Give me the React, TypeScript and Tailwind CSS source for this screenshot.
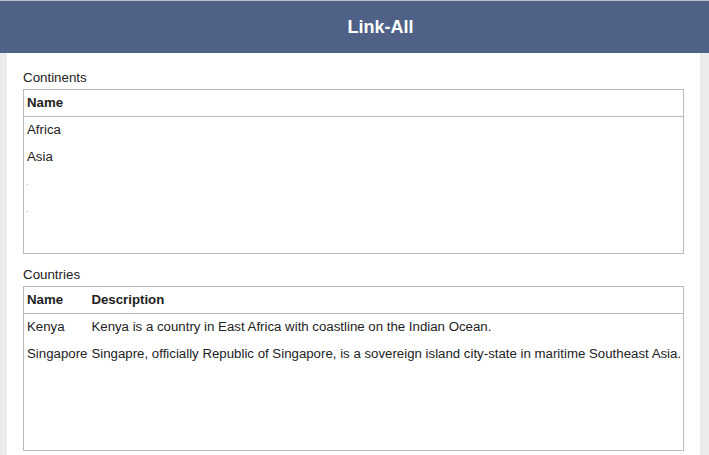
import React from "react";

const font = { fontFamily: '"Liberation Sans", Arial, sans-serif' };

function Section({
  title,
  headers,
  rows,
}: {
  title: string;
  headers: string[];
  rows: (string | null)[][];
}) {
  return (
    <div className="mb-3">
      <div className="text-[13.33px] leading-[17px] text-[#222] mb-[3px]">{title}</div>
      <div className="h-[165px] border border-[#bbbbbb] bg-white overflow-hidden">
        <table className="w-full border-collapse text-[13.25px] text-[#222]">
          <thead>
            <tr className="h-[26px] border-b border-[#bbbbbb]">
              {headers.map((h, i) => (
                <th
                  key={i}
                  className={`text-left font-bold pl-[3px] pr-px whitespace-nowrap ${
                    i === headers.length - 1 ? "w-full" : ""
                  }`}
                >
                  {h}
                </th>
              ))}
            </tr>
          </thead>
          <tbody>
            {rows.map((r, ri) => (
              <tr key={ri} className="h-[27px]">
                {r.map((c, ci) => (
                  <td key={ci} className="pl-[3px] pr-px whitespace-nowrap align-middle">
                    {c === null ? (
                      <span className="inline-block w-px h-px bg-[#d9a676] align-middle" />
                    ) : (
                      c
                    )}
                  </td>
                ))}
              </tr>
            ))}
          </tbody>
        </table>
      </div>
    </div>
  );
}

export default function App() {
  return (
    <div className="h-[455px] overflow-hidden bg-[#ebebeb]" style={font}>
      <header className="h-[53px] border-t border-[#b8bcc6] bg-[#4f6186] flex items-center justify-center pl-[52px]">
        <h1 className="text-white font-bold text-[18px]">Link-All</h1>
      </header>
      <main className="ml-[7px] mr-[9px] bg-white px-4 pt-4 pb-4 min-h-[402px]">
        <Section
          title="Continents"
          headers={["Name"]}
          rows={[["Africa"], ["Asia"], [null], [null]]}
        />
        <Section
          title="Countries"
          headers={["Name", "Description"]}
          rows={[
            ["Kenya", "Kenya is a country in East Africa with coastline on the Indian Ocean."],
            [
              "Singapore",
              "Singapre, officially Republic of Singapore, is a sovereign island city-state in maritime Southeast Asia.",
            ],
          ]}
        />
      </main>
    </div>
  );
}
